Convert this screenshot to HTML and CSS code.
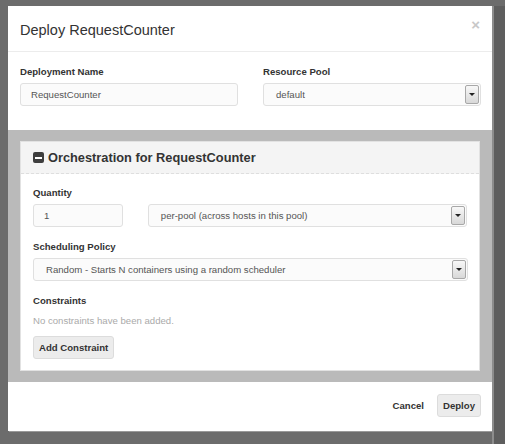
FILE: index.html
```html
<!DOCTYPE html>
<html>
<head>
<meta charset="utf-8">
<link rel="stylesheet" href="styles.css">
</head>
<body>
<div class="screen">
  <div class="modal">
    <div class="modal-header">
      <h1 class="title">Deploy RequestCounter</h1>
      <span class="close">&times;</span>
    </div>
    <div class="top-form">
      <div class="field">
        <label class="label">Deployment Name</label>
        <div class="input wide">RequestCounter</div>
      </div>
      <div class="field">
        <label class="label">Resource Pool</label>
        <div class="select wide pool"><span>default</span><span class="arrow"></span></div>
      </div>
    </div>
    <div class="gray-section">
      <div class="panel">
        <div class="panel-header">
          <span class="minus-icon"><span class="bar"></span></span>
          <span class="panel-title">Orchestration for RequestCounter</span>
        </div>
        <div class="panel-body">
          <label class="label">Quantity</label>
          <div class="qty-row">
            <div class="input qty">1</div>
            <div class="select per-pool"><span>per-pool (across hosts in this pool)</span><span class="arrow"></span></div>
          </div>
          <label class="label spaced">Scheduling Policy</label>
          <div class="select policy"><span>Random - Starts N containers using a random scheduler</span><span class="arrow"></span></div>
          <label class="label spaced">Constraints</label>
          <p class="muted">No constraints have been added.</p>
          <button class="btn">Add Constraint</button>
        </div>
      </div>
    </div>
    <div class="modal-footer">
      <span class="link">Cancel</span>
      <button class="btn">Deploy</button>
    </div>
  </div>
  <div class="side"></div>
</div>
</body>
</html>
```

FILE: styles.css
```css
* { box-sizing: border-box; }
html, body { margin: 0; padding: 0; }
body {
  width: 505px;
  height: 444px;
  overflow: hidden;
  background: #6c6c6c;
  font-family: "Liberation Sans", Arial, sans-serif;
  color: #333;
}
.screen {
  display: flex;
  padding: 6px 0 0 8px;
  height: 444px;
}
.modal {
  width: 484px;
  height: 425px;
  background: #fff;
  display: flex;
  flex-direction: column;
  box-shadow: 1px 1px 0 #999;
}
.side {
  width: 13px;
  height: 438px;
  border-left: 2px solid #8d8d8d;
  background: #5e5e5e;
}
.modal-header {
  height: 46px;
  padding: 0 12px;
  display: flex;
  justify-content: space-between;
  align-items: center;
  border-bottom: 1px solid #ececec;
}
.title {
  margin: 2px 0 0 0;
  font-size: 14.5px;
  font-weight: normal;
  color: #333;
}
.close {
  align-self: flex-start;
  margin-top: 11px;
  margin-right: 0;
  font-size: 15px;
  line-height: 15px;
  font-weight: bold;
  color: #c8c8c8;
}
.top-form {
  height: 78px;
  padding: 14px 11px 0 12px;
  display: flex;
  gap: 25px;
}
.field { width: 218px; }
.label {
  display: block;
  font-size: 9.6px;
  font-weight: bold;
  line-height: 12px;
  color: #333;
  margin-bottom: 5px;
}
.label.spaced { margin-top: 14px; margin-bottom: 5px; }
.input, .select {
  height: 23px;
  border: 1px solid #e0e0e0;
  border-radius: 3px;
  background: #fbfbfb;
  font-size: 9.6px;
  color: #555;
  display: flex;
  align-items: center;
}
.input { padding-left: 10px; }
.select {
  padding-left: 12px;
  justify-content: space-between;
  padding-right: 1px;
}
.input.wide, .select.wide { width: 218px; }
.arrow {
  width: 14px;
  height: 19px;
  border: 1px solid #a8a8a8;
  border-radius: 2px;
  background: linear-gradient(#f8f8f8, #d8d8d8);
  position: relative;
  flex: none;
}
.arrow::after {
  content: "";
  position: absolute;
  left: 3px;
  top: 7px;
  border-left: 3px solid transparent;
  border-right: 3px solid transparent;
  border-top: 3px solid #222;
}
.gray-section {
  height: 252px;
  background: #bababa;
  padding: 11px 12px 11px 12px;
}
.panel {
  height: 230px;
  background: #fff;
  border: 1px solid #e2e2e2;
}
.panel-header {
  height: 32px;
  background: #f4f4f4;
  border-bottom: 1px dashed #dedede;
  display: flex;
  align-items: center;
  padding-left: 12px;
  gap: 4px;
}
.minus-icon {
  width: 11px;
  height: 11px;
  border-radius: 2px;
  background: #3e3e3e;
  display: flex;
  align-items: center;
  justify-content: center;
}
.minus-icon .bar {
  width: 7px;
  height: 2px;
  background: #fff;
}
.panel-title {
  font-size: 12.8px;
  font-weight: bold;
  color: #333;
}
.panel-body {
  padding: 13px 12px 0 12px;
}
.qty-row {
  display: flex;
  gap: 25px;
}
.input.qty { width: 90px; }
.select.per-pool { width: 320px; }
.select.policy { width: 435px; }
.muted {
  margin: 8px 0 9px 0;
  font-size: 9.6px;
  line-height: 12px;
  color: #aaa;
}
.btn {
  height: 23px;
  padding: 0 5px;
  border: 1px solid #dcdcdc;
  border-radius: 3px;
  background: #ececec;
  font-family: "Liberation Sans", Arial, sans-serif;
  font-size: 9.6px;
  font-weight: bold;
  color: #333;
}
.modal-footer {
  flex: 1;
  display: flex;
  justify-content: flex-end;
  align-items: center;
  gap: 13px;
  padding: 0 11px 3px 0;
}
.link {
  font-size: 9.6px;
  font-weight: bold;
  color: #333;
}
```
